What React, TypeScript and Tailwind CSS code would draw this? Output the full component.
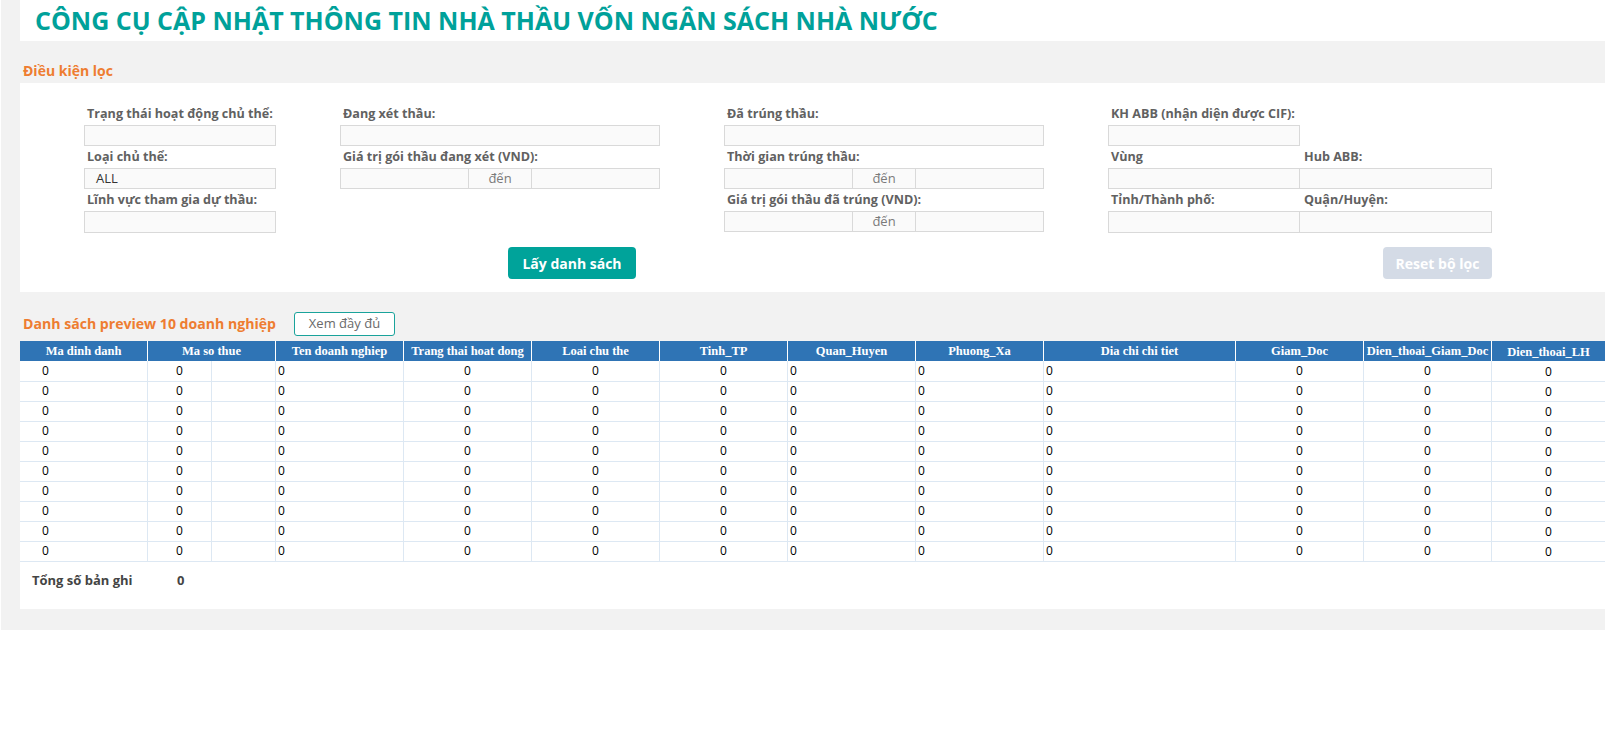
import React from "react";

const COLS =
  "grid grid-cols-[128px_64px_64px_128px_128px_128px_128px_128px_128px_192px_128px_128px_113px]";

function Label({ children, className = "" }: { children?: React.ReactNode; className?: string }) {
  return (
    <div
      className={
        "h-[22px] flex items-center pl-[3px] text-[12.6px] font-bold text-[#616161] whitespace-nowrap " +
        className
      }
    >
      {children}
    </div>
  );
}

function Box({ children, className = "" }: { children?: React.ReactNode; className?: string }) {
  return <div className={"bg-[#fafafa] border-[#d9d9d9] " + className}>{children}</div>;
}

function Range() {
  return (
    <div className="h-[21px] flex border border-[#d9d9d9] bg-[#fafafa]">
      <div className="w-[128px] border-r border-[#d9d9d9]" />
      <div className="w-[63px] border-r border-[#d9d9d9] flex items-center justify-center text-[13px] text-[#7a7a7a]">
        đến
      </div>
      <div className="flex-1" />
    </div>
  );
}

const headers: { label: string; span?: boolean }[] = [
  { label: "Ma dinh danh" },
  { label: "Ma so thue", span: true },
  { label: "Ten doanh nghiep" },
  { label: "Trang thai hoat dong" },
  { label: "Loai chu the" },
  { label: "Tinh_TP" },
  { label: "Quan_Huyen" },
  { label: "Phuong_Xa" },
  { label: "Dia chi chi tiet" },
  { label: "Giam_Doc" },
  { label: "Dien_thoai_Giam_Doc" },
  { label: "Dien_thoai_LH" },
];

const bodyCells: string[] = [
  "justify-start pl-[22px]",
  "justify-center",
  "justify-center",
  "justify-start pl-[2px] pb-[1px]",
  "justify-center",
  "justify-center",
  "justify-center",
  "justify-start pl-[2px]",
  "justify-start pl-[2px]",
  "justify-start pl-[2px]",
  "justify-center",
  "justify-center",
  "justify-center pt-[2px]",
];

export default function App() {
  return (
    <div className="min-h-[734px] bg-white font-['Open_Sans',sans-serif]">
      <div className="ml-px bg-[#f2f2f2] pl-[19px] pb-[21px]">
        {/* Title */}
        <div className="h-[41px] bg-white flex items-center pl-[15px]">
          <h1 className="text-[25px] font-bold text-[#00a19a] leading-none whitespace-nowrap">
            CÔNG CỤ CẬP NHẬT THÔNG TIN NHÀ THẦU VỐN NGÂN SÁCH NHÀ NƯỚC
          </h1>
        </div>

        {/* Filter heading */}
        <div className="h-[42px] flex items-end pb-[2px] pl-[3px]">
          <div className="h-[22px] flex items-center text-[14px] font-bold text-[#ee7d31]">Điều kiện lọc</div>
        </div>

        {/* Filter panel */}
        <div className="bg-white h-[209px] pt-[20px]">
          <div className="flex pl-[64px]">
            <div className="w-[192px]">
              <Label>Trạng thái hoạt động chủ thể:</Label>
              <Box className="h-[21px] border" />
              <Label>Loại chủ thể:</Label>
              <Box className="h-[21px] border flex items-center pl-[11px] text-[13px] text-[#333]">ALL</Box>
              <Label>Lĩnh vực tham gia dự thầu:</Label>
              <Box className="h-[22px] border" />
            </div>
            <div className="w-[320px] ml-[64px]">
              <Label>Đang xét thầu:</Label>
              <Box className="h-[21px] border" />
              <Label>Giá trị gói thầu đang xét (VND):</Label>
              <Range />
            </div>
            <div className="w-[320px] ml-[64px]">
              <Label>Đã trúng thầu:</Label>
              <Box className="h-[21px] border" />
              <Label>Thời gian trúng thầu:</Label>
              <Range />
              <Label>Giá trị gói thầu đã trúng (VND):</Label>
              <Range />
            </div>
            <div className="w-[384px] ml-[64px]">
              <Label>KH ABB (nhận diện được CIF):</Label>
              <Box className="h-[21px] w-[192px] border" />
              <div className="flex">
                <Label className="w-[192px]">Vùng</Label>
                <Label className="pl-[4px]">Hub ABB:</Label>
              </div>
              <div className="flex">
                <Box className="h-[21px] w-[192px] border" />
                <Box className="h-[21px] w-[192px] border-y border-r" />
              </div>
              <div className="flex">
                <Label className="w-[192px]">Tỉnh/Thành phố:</Label>
                <Label className="pl-[4px]">Quận/Huyện:</Label>
              </div>
              <div className="flex">
                <Box className="h-[22px] w-[192px] border" />
                <Box className="h-[22px] w-[192px] border-y border-r" />
              </div>
            </div>
          </div>
          <div className="flex justify-between pl-[488px] pr-[113px] mt-[14px]">
            <button className="w-[128px] h-[32px] rounded-[4px] bg-[#00a39a] text-white text-[14px] font-bold">
              Lấy danh sách
            </button>
            <button className="w-[109px] h-[32px] rounded-[4px] bg-[#d4dbe6] text-white text-[14px] font-bold">
              Reset bộ lọc
            </button>
          </div>
        </div>

        {/* List heading */}
        <div className="h-[49px] pt-[14px] flex items-center">
          <div className="w-[274px] pl-[3px] text-[14.1px] font-bold text-[#ee7d31] whitespace-nowrap">
            Danh sách preview 10 doanh nghiệp
          </div>
          <button className="w-[101px] h-[24px] rounded-[3px] border border-[#1aa39b] bg-white text-[13px] text-[#6a6a6a]">
            Xem đầy đủ
          </button>
        </div>

        {/* Table */}
        <div className="bg-white">
          <div className={COLS + " h-[20px] bg-[#2f74b5]"}>
            {headers.map((h, i) => (
              <div
                key={i}
                className={
                  (h.span ? "col-span-2 " : "") +
                  (i === headers.length - 1 ? "pt-[2px] " : "border-r border-white ") +
                  "flex items-center justify-center text-white font-bold text-[12.5px] whitespace-nowrap overflow-hidden font-['Liberation_Serif',serif]"
                }
              >
                {h.label}
              </div>
            ))}
          </div>
          {Array.from({ length: 10 }).map((_, r) => (
            <div key={r} className={COLS + " h-[20px]"}>
              {bodyCells.map((c, i) => (
                <div
                  key={i}
                  className={
                    (i === bodyCells.length - 1 ? "" : "border-r ") +
                    "border-b border-[#dde8f3] flex items-center text-[12px] text-black " +
                    c
                  }
                >
                  {i === 2 ? "" : "0"}
                </div>
              ))}
            </div>
          ))}
        </div>

        {/* Footer */}
        <div className="bg-white h-[48px] pt-[9px] flex items-start">
          <div className="w-[157px] pl-[12px] h-[22px] flex items-center text-[13px] font-bold text-[#444]">
            Tổng số bản ghi
          </div>
          <div className="h-[22px] flex items-center text-[13px] font-bold text-[#444]">0</div>
        </div>
      </div>
    </div>
  );
}
